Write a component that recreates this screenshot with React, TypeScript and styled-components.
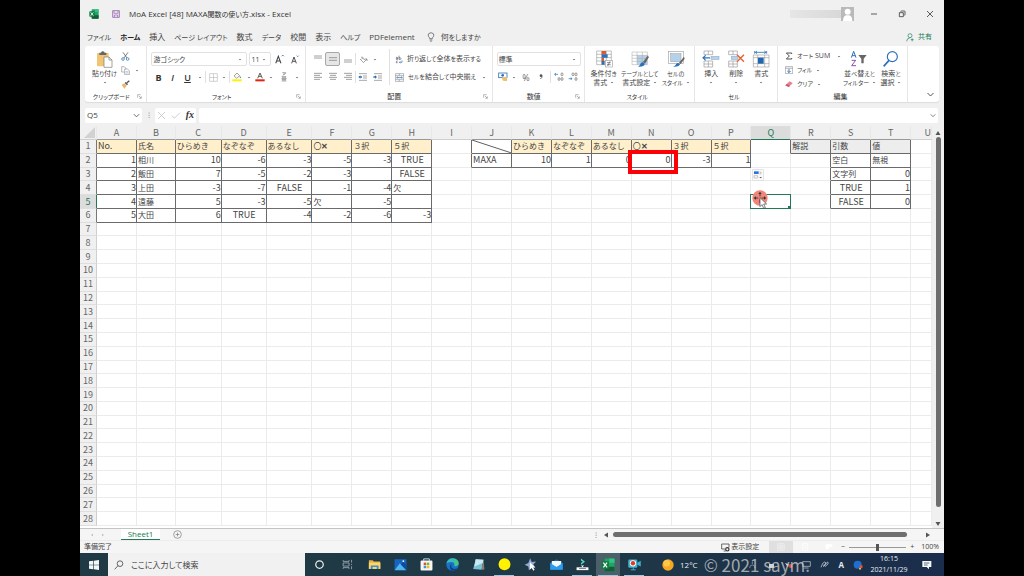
import React from "react";
import styled, { createGlobalStyle, css } from "styled-components";

const UI = `"Open Sans", "Noto Sans CJK JP", sans-serif`;
const SHEET = `"Noto Sans CJK JP", sans-serif`;
const GREEN = "#217a55";

const Global = createGlobalStyle`
  * { box-sizing: border-box; }
  body { margin: 0; background: #000; }
  button, input, select { font: inherit; color: inherit; border: 0; background: none; padding: 0; margin: 0; outline: 0; }
  svg { display: block; flex: none; }
`;

const Stage = styled.main`
  padding: 0 80px;
  background: #000;
`;
const Window = styled.div`
  display: flex;
  flex-direction: column;
  min-height: 100vh;
  background: #f0f0f0;
  color: #444;
  font: 8px/10px ${UI};
  font-feature-settings: "palt";
  white-space: nowrap;
`;
const Spacer = styled.div`
  flex: 1;
`;
const Row = styled.div<{ $gap?: number }>`
  display: flex;
  align-items: center;
  gap: ${(p) => p.$gap ?? 0}px;
`;

/* Interface text sets its kana one pixel smaller than its kanji. */
const Kana = styled.span`
  font-size: calc(1em - 1px);
`;
const Mixed = ({ children }: { children: string }) => (
  <span>
    {children.split(/([\u3040-\u30ff]+)/).map((part, i) => (i % 2 ? <Kana key={i}>{part}</Kana> : part))}
  </span>
);

/* ---- title bar ---- */
const TitleBar = styled.header`
  display: flex;
  align-items: center;
  height: 28px;
  padding: 0 0 0 9px;
`;
const Title = styled.h1`
  margin: 0;
  padding-left: 9px;
  font: inherit;
  color: #333;
`;
const TitleKanji = styled.span`
  font-size: 7px;
`;
const AccountName = styled.div`
  width: 51px;
  height: 8px;
  background: linear-gradient(90deg, #e6e6e6, #d8d8d8);
`;
const WinButton = styled.button`
  display: grid;
  place-items: center;
  width: 28px;
  height: 20px;
`;
const Avatar = styled.span`
  margin-right: 6px;
`;

/* ---- ribbon tabs ---- */
const Tabs = styled.nav`
  display: flex;
  align-items: center;
  gap: 9px;
  height: 18px;
  padding: 0 12px 0 7px;
`;
const Tab = styled.button<{ $active?: boolean }>`
  font-weight: ${(p) => (p.$active ? 700 : 400)};
  color: ${(p) => (p.$active ? "#222" : "#444")};
`;
const TellMe = styled.button`
  display: flex;
  align-items: center;
  gap: 6px;
  margin-left: 3px;
`;
const Share = styled.button`
  display: flex;
  align-items: center;
  gap: 4px;
  color: ${GREEN};
  font-size: 7px;
`;

/* ---- ribbon ---- */
const Ribbon = styled.section`
  display: flex;
  height: 56px;
  margin: 0 5px;
  background: #fff;
  border-radius: 3px;
  box-shadow: 0 1px 1px #dcdcdc;
  font-size: 7px;
  line-height: 9px;
`;
const Group = styled.div<{ $w: number }>`
  flex: ${(p) => p.$w} 1 0;
  min-width: 0;
  display: flex;
  flex-direction: column;
  border-right: 1px solid #e6e6e6;
`;
const GroupBody = styled.div<{ $pad?: number }>`
  flex: 1;
  display: flex;
  min-height: 0;
  padding: 3px 0 0 ${(p) => p.$pad ?? 4}px;
`;
const GroupLabel = styled.div`
  display: flex;
  justify-content: center;
  align-items: center;
  height: 11px;
  padding-right: 4px;
  color: #333;
`;
const GroupName = styled.span`
  flex: 1;
  text-align: center;
`;
const Stack = styled.div<{ $gap?: number; $pt?: number; $pl?: number }>`
  display: flex;
  flex-direction: column;
  gap: ${(p) => p.$gap ?? 0}px;
  padding: ${(p) => p.$pt ?? 0}px 0 0 ${(p) => p.$pl ?? 0}px;
`;
const Tool = styled.button<{ $w: number; $on?: boolean }>`
  display: grid;
  place-items: center;
  width: ${(p) => p.$w}px;
  height: 14px;
  flex: none;
  ${(p) =>
    p.$on &&
    css`
      background: #e6e6e6;
      border: 1px solid #a8a8a8;
      border-radius: 2px;
    `}
`;
const Letter = styled.span<{ $bold?: boolean; $italic?: boolean; $line?: boolean; $thin?: boolean }>`
  font-size: 9px;
  color: ${(p) => (p.$thin ? "#666" : "#333")};
  font-weight: ${(p) => (p.$bold ? 700 : p.$thin ? 400 : 600)};
  font-style: ${(p) => (p.$italic ? "italic" : "normal")};
  text-decoration: ${(p) => (p.$line ? "underline" : "none")};
`;
const Divider = styled.i<{ $h?: number; $m?: number }>`
  width: 1px;
  height: ${(p) => p.$h ?? 12}px;
  margin: 0 ${(p) => p.$m ?? 3}px;
  background: #e0e0e0;
`;
const TextTool = styled.button`
  display: flex;
  align-items: center;
  gap: 4px;
  height: 14px;
`;
const Combo = styled.span<{ $w: number }>`
  display: flex;
  align-items: center;
  width: ${(p) => p.$w}px;
  height: 14px;
  padding: 0 4px 0 1px;
  border: 1px solid #e1e1e1;
  border-radius: 2px;
  background: #fff;
`;
const Select = styled.select`
  flex: 1;
  min-width: 0;
  appearance: none;
`;
const BigButton = styled.button<{ $w: number }>`
  display: flex;
  flex-direction: column;
  align-items: center;
  width: ${(p) => p.$w}px;
  height: 40px;
  flex: none;
`;
const BigLabel = styled.span`
  display: flex;
  align-items: center;
  justify-content: center;
  gap: 3px;
  height: 9px;
`;
const BigIcon = styled.span`
  display: grid;
  place-items: center;
  height: 20px;
`;
const Collapse = styled.button`
  align-self: flex-end;
  display: grid;
  place-items: center end;
  flex: none;
  width: 31px;
  height: 16px;
  padding-right: 4px;
`;

/* ---- formula bar ---- */
const FormulaBar = styled.section`
  display: flex;
  align-items: center;
  height: 24px;
  padding: 2px 6px 0 5px;
  gap: 3px;
`;
const WhiteBox = styled.div<{ $w?: number }>`
  display: flex;
  align-items: center;
  justify-content: space-between;
  flex: ${(p) => (p.$w ? "none" : 1)};
  width: ${(p) => (p.$w ? `${p.$w}px` : "auto")};
  height: 15px;
  padding: 0 2px;
  background: #fff;
  border-radius: 2px;
`;
const BoxInput = styled.input`
  flex: 1;
  min-width: 0;
`;
const Fx = styled.span`
  font: italic 700 10px/12px "Liberation Serif", serif;
  color: #333;
`;
const Dots = styled.span`
  width: 7px;
  text-align: center;
  color: #888;
`;

/* ---- sheet ---- */
const SheetArea = styled.section`
  flex: 1;
  display: flex;
`;
const Table = styled.table`
  flex: 1;
  min-width: 0;
  display: flex;
  flex-direction: column;
  background: #fff;
  font: 9px/12px ${SHEET};
  color: #444;
`;
const HeadRows = styled.thead`
  display: block;
`;
const BodyRows = styled.tbody`
  flex: 1;
  display: grid;
  grid-template-rows: repeat(28, minmax(13px, 1fr));
  padding-bottom: 2px;
`;
const Line = styled.tr`
  display: grid;
  grid-template-columns: 17px 40fr 39fr 46fr 45fr 46fr repeat(15, 40fr) 21fr;
`;
const HeadCell = styled.th<{ $active?: boolean; $dark?: boolean; $end?: boolean }>`
  display: flex;
  align-items: center;
  justify-content: ${(p) => (p.$end ? "flex-end" : "center")};
  height: 14px;
  min-width: 0;
  padding: 0;
  overflow: hidden;
  font-weight: 400;
  color: ${(p) => (p.$active ? GREEN : "#666")};
  background: ${(p) => (p.$active ? "#dcdcdc" : "#f0f0f0")};
  border-right: 1px solid #e8e8e8;
  border-bottom: 1px solid ${(p) => (p.$active ? GREEN : p.$dark ? "#999" : "#cfcfcf")};
`;
const RowHead = styled.th<{ $active?: boolean; $dark?: boolean }>`
  display: flex;
  align-items: center;
  justify-content: center;
  padding: 0;
  min-height: 0;
  font-weight: 400;
  color: ${(p) => (p.$active ? GREEN : "#666")};
  background: ${(p) => (p.$active ? "#dcdcdc" : "#f0f0f0")};
  border-right: 1px solid ${(p) => (p.$active ? GREEN : p.$dark ? "#777" : "#cfcfcf")};
  border-bottom: 1px solid #dedede;
`;
const Cell = styled.td<{ $fill?: string; $align?: string; $r?: boolean; $b?: boolean; $jp?: boolean }>`
  position: relative;
  display: flex;
  align-items: center;
  justify-content: ${(p) => p.$align ?? "flex-start"};
  min-width: 0;
  min-height: 0;
  padding: 0 0 0 1px;
  font-size: ${(p) => (p.$jp ? 8 : 9)}px;
  font-feature-settings: normal;
  background: ${(p) => p.$fill ?? "#fff"};
  border-right: 1px solid ${(p) => (p.$r ? "#6a6a6a" : "#ebebeb")};
  border-bottom: 1px solid ${(p) => (p.$b ? "#6a6a6a" : "#ebebeb")};
`;
const Corner = styled.svg`
  width: 11px;
  height: 11px;
  margin-left: 3px;
`;
const Diagonal = styled.svg`
  position: absolute;
  inset: 0;
  width: 100%;
  height: 100%;
`;
const RedFrame = styled.div`
  position: absolute;
  z-index: 3;
  top: -4px;
  right: -7px;
  bottom: -7px;
  left: -4px;
  border: 4px solid #fb0007;
`;
const PasteTag = styled.div`
  position: absolute;
  z-index: 2;
  top: 1px;
  left: 1px;
`;
const Selection = styled.div`
  position: absolute;
  z-index: 2;
  inset: -1px;
  border: 1px solid ${GREEN};
  &::after {
    content: "";
    position: absolute;
    right: -1px;
    bottom: -1px;
    width: 3px;
    height: 3px;
    background: ${GREEN};
  }
`;
const Pointer = styled.div`
  position: absolute;
  z-index: 4;
  top: -5px;
  left: 1px;
`;
const VScroll = styled.div`
  width: 12px;
  display: flex;
  flex-direction: column;
  align-items: center;
  gap: 1px;
  padding: 4px 0 1px;
  background: #f0f0f0;
`;
const VThumb = styled.div`
  width: 5px;
  flex: 370 1 0;
  border-radius: 3px;
  background: #6e6e6e;
`;
const VRest = styled.div`
  flex: 12 1 0;
`;

/* ---- sheet tabs ---- */
const SheetBar = styled.section`
  display: flex;
  align-items: stretch;
  height: 12px;
  background: #f5f5f5;
  border-top: 1px solid #c4c4c4;
`;
const SheetNav = styled.div`
  display: flex;
  align-items: center;
  gap: 7px;
  width: 41px;
  padding-left: 10px;
`;
const SheetTab = styled.button`
  width: 39px;
  background: #fff;
  color: ${GREEN};
  border-bottom: 1px solid ${GREEN};
  line-height: 8px;
`;
const HScroll = styled.div`
  flex: 340 1 0;
  display: flex;
  align-items: center;
  gap: 4px;
  padding-right: 13px;
`;
const HThumb = styled.div`
  flex: 1;
  height: 5px;
  margin-right: 14px;
  border-radius: 3px;
  background: #6e6e6e;
`;
const TabsLeft = styled.div`
  flex: 514 1 0;
  display: flex;
`;
const AddSheet = styled.button`
  padding-left: 13px;
`;

/* ---- status bar ---- */
const StatusBar = styled.footer`
  display: flex;
  align-items: center;
  height: 13px;
  padding: 0 5px 0 4px;
  background: #f5f5f5;
  border-top: 1px solid #ececec;
  font-size: 7px;
`;
const DisplaySettings = styled.button`
  display: flex;
  align-items: center;
  gap: 1px;
  margin-right: 10px;
`;
const ViewButton = styled.button<{ $on?: boolean }>`
  display: grid;
  place-items: center;
  width: 24px;
  height: 12px;
  background: ${(p) => (p.$on ? "#e0e0e0" : "transparent")};
`;
const Zoom = styled.input`
  appearance: none;
  width: 57px;
  height: 8px;
  margin: 0 4px;
  background: linear-gradient(#999, #999) center / 100% 1px no-repeat;
  &::-webkit-slider-thumb {
    appearance: none;
    width: 3px;
    height: 7px;
    background: #555;
  }
`;
const Percent = styled.span`
  padding-left: 7px;
`;

/* ---- taskbar ---- */
const Taskbar = styled.nav`
  position: relative;
  display: flex;
  align-items: stretch;
  height: 23px;
  background: linear-gradient(90deg, #203a45, #1f3846 60%, #1a2d4c);
  color: #e8eef2;
`;
const StartButton = styled.button`
  display: grid;
  place-items: center;
  width: 28px;
`;
const SearchBox = styled.label`
  display: flex;
  align-items: center;
  gap: 7px;
  width: 197px;
  padding-left: 6px;
  background: #f1f1f1;
  color: #444;
`;
const SearchInput = styled.input`
  flex: 1;
  min-width: 0;
  &::placeholder {
    color: #444;
  }
`;
const TaskButton = styled.button<{ $w?: number; $active?: boolean }>`
  display: grid;
  place-items: center;
  width: ${(p) => p.$w ?? 26}px;
  background: ${(p) => (p.$active ? "#4b6069" : "transparent")};
  background-clip: content-box;
  padding: 0 1px;
`;
const OpenMark = styled.i`
  grid-area: 1 / 1;
  align-self: end;
  width: 20px;
  height: 1px;
  background: #9cc8e4;
`;
const TaskArt = styled.span`
  grid-area: 1 / 1;
`;
const Weather = styled.div`
  display: flex;
  align-items: center;
  gap: 6px;
  margin-left: 15px;
`;
const Tray = styled.div`
  display: flex;
  align-items: center;
  gap: 9px;
  padding-right: 5px;
`;
const Clock = styled.div`
  width: 42px;
  text-align: center;
  font-size: 7px;
  line-height: 11px;
`;
const Watermark = styled.div`
  position: absolute;
  right: 134px;
  bottom: 0;
  font: 17px/22px ${SHEET};
  font-feature-settings: normal;
  color: rgba(200, 200, 200, 0.8);
`;

/* ---- drawings ---- */
type IconProps = { w: number; h?: number; vb?: string; children: React.ReactNode };
const Icon = ({ w, h = w, vb, children }: IconProps) => (
  <svg width={w} height={h} viewBox={vb ?? `0 0 ${w * 3} ${h * 3}`} fill="none" aria-hidden="true">
    {children}
  </svg>
);
const Caret = () => (
  <Icon w={4} h={3}>
    <path d="M2 3 L6 7 L10 3Z" fill="#666" />
  </Icon>
);
const Chevron = ({ w = 8 }: { w?: number }) => (
  <Icon w={w} h={5} vb="0 0 24 15">
    <path d="M3 3 L12 12 L21 3" stroke="#555" strokeWidth="3" />
  </Icon>
);
const Launcher = () => (
  <Icon w={5}>
    <path d="M2 11V2H11M6 6L12 12M13 7V13H7" stroke="#777" strokeWidth="1.6" />
  </Icon>
);
const ExcelIcon = ({ w = 10 }: { w?: number }) => (
  <Icon w={w} vb="0 0 30 30">
    <rect x="8" y="1" width="21" height="28" rx="2" fill="#21a366" />
    <path d="M18 1H27Q29 1 29 3V10H18Z" fill="#33c481" />
    <path d="M8 19H29V27Q29 29 27 29H10Q8 29 8 27Z" fill="#185c37" />
    <rect x="1" y="7" width="16" height="16" rx="2" fill="#107c41" />
    <path d="M5 10L13 20M13 10L5 20" stroke="#fff" strokeWidth="2.6" />
  </Icon>
);
const Lines = ({ y, short }: { y: number[]; short?: "l" | "c" | "r" }) => (
  <Icon w={10}>
    {y.map((v, i) => {
      const cut = i % 2 === 1 && short;
      const a = cut && short !== "l" ? (short === "c" ? 6 : 9) : 3;
      const b = cut && short !== "r" ? (short === "c" ? 24 : 21) : 27;
      return <path key={v} d={`M${a} ${v}H${b}`} stroke="#888" strokeWidth="2.4" />;
    })}
  </Icon>
);
const Indent = ({ left }: { left?: boolean }) => (
  <Icon w={10}>
    <path d="M3 5H27M15 12H27M15 18H27M3 25H27" stroke="#888" strokeWidth="2.2" />
    <path d={left ? "M1 15L7 10V13H12V17H7V20Z" : "M12 15L6 10V13H1V17H6V20Z"} fill="#2a72b8" />
  </Icon>
);
const PasteIcon = () => (
  <Icon w={17}>
    <rect x="3" y="6" width="35" height="40" rx="2" fill="#f0c573" />
    <path d="M10 5H15Q16 1 20 1Q25 1 26 5H31V12H10Z" fill="#666" />
    <path d="M24 18H39L48 27V49H24Z" fill="#fff" stroke="#777" strokeWidth="2" />
    <path d="M39 18V27H48" stroke="#777" strokeWidth="2" />
  </Icon>
);
const CutIcon = () => (
  <Icon w={9}>
    <path d="M6 1L18 18M21 1L9 18" stroke="#555" strokeWidth="2.2" />
    <circle cx="6" cy="21" r="4" stroke="#2a72b8" strokeWidth="2.2" />
    <circle cx="20" cy="21" r="4" stroke="#2a72b8" strokeWidth="2.2" />
  </Icon>
);
const CopyIcon = () => (
  <Icon w={9}>
    <path d="M2 2H10L14 6V18H2Z" fill="#fff" stroke="#888" strokeWidth="1.8" />
    <path d="M11 9H19L25 14V26H11Z" fill="#fff" stroke="#888" strokeWidth="1.8" />
    <path d="M14 17H22M14 21H22" stroke="#6d9dcc" strokeWidth="1.6" />
  </Icon>
);
const BrushIcon = () => (
  <Icon w={9}>
    <path d="M2 14L10 10L17 17L10 26Z" fill="#edb569" />
    <path d="M11 9L18 16L21 13L14 6Z" fill="#555" />
    <path d="M17 9L25 2" stroke="#555" strokeWidth="4" />
  </Icon>
);
const BordersIcon = () => (
  <Icon w={9}>
    <path d="M2 2H25V25H2ZM13.5 2V25M2 13.5H25" stroke="#b5b5b5" strokeWidth="1.8" />
  </Icon>
);
const BucketIcon = () => (
  <Icon w={10}>
    <path d="M6 12L15 3L23 11L14 19Z" fill="#f8f8f8" stroke="#777" strokeWidth="2" />
    <path d="M23 11Q29 16 26 19Q22 18 23 11Z" fill="#2a72b8" />
    <rect x="1" y="22" width="28" height="6" fill="#fff200" />
  </Icon>
);
const FontColorIcon = () => (
  <Icon w={10}>
    <path d="M8 19L15 3L22 19M10.5 13H19.5" stroke="#555" strokeWidth="2.8" />
    <rect x="1" y="22" width="28" height="6" fill="#e82010" />
  </Icon>
);
const FontSizeIcon = ({ down }: { down?: boolean }) => (
  <Icon w={down ? 9 : 10} vb="0 0 27 27">
    <path d="M2 25L9 6L16 25M5 19H13" stroke="#444" strokeWidth="2.8" />
    <path d={down ? "M17 2L20 5L23 2" : "M18 6L21 3L24 6"} stroke="#2a72b8" strokeWidth="2.4" />
  </Icon>
);
const PhoneticIcon = () => (
  <Icon w={8} h={10}>
    <path d="M7 2H17Q16 7 12 8M12 4Q12 9 8 11" stroke="#777" strokeWidth="2" />
    <path d="M5 14H19M5 27H19M9 14V27M15 14V27M6 18H18V22H6Z" stroke="#777" strokeWidth="1.8" />
  </Icon>
);
const RotateIcon = () => (
  <Icon w={9}>
    <path d="M3 12L12 21M6 7Q11 4 14 10L17 15M7 13Q9 8 13 12" stroke="#777" strokeWidth="2" />
    <path d="M12 24L24 12M24 12V18M24 12H18" stroke="#777" strokeWidth="2" />
  </Icon>
);
const WrapIcon = () => (
  <Icon w={8} h={9}>
    <path d="M3 8Q6 5 8 8V13Q2 14 3 11Q4 9 8 10M12 2V13Q18 15 18 10Q17 7 12 8" stroke="#555" strokeWidth="2" />
    <path d="M8 18Q2 18 4 23Q6 25 8 23" stroke="#555" strokeWidth="2" />
    <path d="M21 16V22H13M16 19L13 22L16 25" stroke="#2a72b8" strokeWidth="2" />
  </Icon>
);
const MergeIcon = () => (
  <Icon w={9}>
    <path d="M1 2H26V25H1ZM13 2V8M13 19V25M1 8H26M1 19H26" stroke="#888" strokeWidth="1.8" />
    <path d="M5 13.5H22M8 11L5 13.5L8 16M19 11L22 13.5L19 16" stroke="#2a72b8" strokeWidth="2" />
  </Icon>
);
const CurrencyIcon = () => (
  <Icon w={10}>
    <rect x="2" y="3" width="25" height="14" fill="#fff" stroke="#2a72b8" strokeWidth="2.4" />
    <circle cx="14" cy="10" r="4" fill="#2a72b8" />
    <path d="M13 15H27V27H17Q13 26 13 22Z" fill="#efbf71" />
  </Icon>
);
const CommaIcon = () => (
  <Icon w={6} h={8}>
    <circle cx="9" cy="8" r="4" fill="#555" />
    <path d="M12 8Q13 14 7 18" stroke="#555" strokeWidth="2.6" />
  </Icon>
);
const DecimalIcon = ({ down }: { down?: boolean }) => (
  <Icon w={10}>
    <path d={down ? "M2 20H12M8 16L12 20L8 24" : "M12 7H2M6 3L2 7L6 11"} stroke="#2a72b8" strokeWidth="2.2" />
    <g stroke="#666" strokeWidth="2">
      <ellipse cx="24" cy="7" rx="3" ry="4.5" />
      <ellipse cx="24" cy="21" rx="3" ry="4.5" />
      {down ? <ellipse cx="15" cy="7" rx="3" ry="4.5" /> : <ellipse cx="15" cy="21" rx="3" ry="4.5" />}
    </g>
  </Icon>
);
const CondIcon = () => (
  <Icon w={18}>
    <path d="M5 3H49V44H5ZM5 13H49M5 23H49M5 33H49M20 3V44M34 3V44" stroke="#999" strokeWidth="1.8" fill="#fff" />
    <path d="M20 3H33V13H20ZM20 23H27V33H20Z" fill="#e2572b" />
    <path d="M20 13H38V23H20ZM20 33H29V44H20Z" fill="#2a72b8" />
    <rect x="31" y="31" width="21" height="20" fill="#fff" stroke="#999" strokeWidth="1.8" />
    <path d="M36 38H47M36 44H47M45 34L38 48" stroke="#555" strokeWidth="2" />
  </Icon>
);
const TableIcon = () => (
  <Icon w={18}>
    <rect x="3" y="6" width="46" height="38" fill="#fff" />
    <path d="M18 16H49V44H18Z" fill="#b5d2ea" />
    <path d="M3 6H49V44H3ZM3 16H49M3 25H49M3 34H49M18 6V44M34 6V44" stroke="#aaa" strokeWidth="1.6" />
    <path d="M51 16L36 36L42 41L53 22Z" fill="#666" />
    <path d="M21 50Q28 48 29 40Q36 33 41 42Q40 51 21 50Z" fill="#2a72b8" />
  </Icon>
);
const CellStyleIcon = () => (
  <Icon w={18}>
    <rect x="4" y="5" width="45" height="36" fill="#fff" stroke="#999" strokeWidth="1.8" />
    <rect x="11" y="11" width="31" height="24" fill="#b5d2ea" stroke="#999" strokeWidth="1.5" />
    <path d="M51 20L36 38L41 42L53 26Z" fill="#666" />
    <path d="M18 50Q25 48 28 41Q34 36 39 43Q37 51 18 50Z" fill="#2a72b8" />
  </Icon>
);
const InsertIcon = () => (
  <Icon w={18}>
    <path d="M6 3H32V14H6ZM19 3V14M6 33H32V51H6ZM6 42H32M19 33V51" stroke="#999" strokeWidth="2" />
    <rect x="27" y="19" width="24" height="9" fill="#b5d2ea" stroke="#8fb0cc" strokeWidth="1.8" />
    <path d="M24 23.5H3M11 16L3 23.5L11 31" stroke="#2a72b8" strokeWidth="3.5" />
  </Icon>
);
const DeleteIcon = () => (
  <Icon w={18}>
    <path d="M5 3H31V14H5ZM18 3V14M5 33H31V51H5ZM5 42H31M18 33V51" stroke="#999" strokeWidth="2" />
    <rect x="13" y="19" width="20" height="9" fill="#b5d2ea" stroke="#8fb0cc" strokeWidth="1.8" />
    <path d="M30 14L51 35M51 14L30 35" stroke="#e2622f" strokeWidth="4" />
  </Icon>
);
const FormatIcon = () => (
  <Icon w={18}>
    <path d="M8 3V11M44 3V11M10 7H42M15 3L10 7L15 11M37 3L42 7L37 11" stroke="#2a72b8" strokeWidth="2.5" />
    <path d="M4 15H51V51H4ZM4 23H51M4 41H51M17 15V51M38 15V51" stroke="#999" strokeWidth="1.8" />
    <rect x="18" y="23" width="17" height="18" fill="#1f66ae" />
  </Icon>
);
const SigmaIcon = () => (
  <Icon w={8}>
    <path d="M20 6V3H4L13 12L4 21H20V18" stroke="#444" strokeWidth="2.8" />
  </Icon>
);
const FillIcon = () => (
  <Icon w={8}>
    <path d="M1 2H23V23H1ZM1 7H23" stroke="#888" strokeWidth="1.8" />
    <path d="M12 9V19M7 15L12 20L17 15" stroke="#2a72b8" strokeWidth="2.8" />
  </Icon>
);
const EraserIcon = () => (
  <Icon w={8}>
    <path d="M14 4L23 10L11 21L1 16Z" fill="#ea7f8d" />
    <path d="M6 12L15 18L11 21L1 16Z" fill="#c9566a" />
  </Icon>
);
const SortIcon = () => (
  <Icon w={18}>
    <path d="M4 23L11 4L18 23M6 17H16" stroke="#2a72b8" strokeWidth="3" />
    <path d="M5 31H17L5 47H18" stroke="#8a4fb0" strokeWidth="3" />
    <path d="M25 15H50L41 26V40H34V26Z" fill="#666" />
  </Icon>
);
const FindIcon = () => (
  <Icon w={18}>
    <circle cx="31" cy="20" r="15" stroke="#2a72b8" strokeWidth="3.5" />
    <path d="M21 31L5 49" stroke="#2a72b8" strokeWidth="5" />
  </Icon>
);
const Arrow = ({ d }: { d: "u" | "d" | "l" | "r" }) => (
  <Icon w={6} vb="0 0 12 12">
    <path
      d={{ u: "M1 10L6 2L11 10Z", d: "M1 2L6 10L11 2Z", l: "M10 1L2 6L10 11Z", r: "M2 1L10 6L2 11Z" }[d]}
      fill="#555"
    />
  </Icon>
);
const Magnifier = () => (
  <Icon w={10}>
    <circle cx="18" cy="11" r="8.5" stroke="#444" strokeWidth="2.4" />
    <path d="M12 17L2 28" stroke="#444" strokeWidth="2.4" />
  </Icon>
);

/* ---- sheet data ---- */
type Item = { v: React.ReactNode; fill?: string; boxed?: boolean; jp?: boolean; align?: string; over?: React.ReactNode };
const COLS = "ABCDEFGHIJKLMNOPQRSTU".split("");
const CREAM = "#fff0cb";
const GREY = "#ededed";
const OX = (
  <>
    〇<b>✕</b>
  </>
);
const cells: Record<string, Item> = {};
const put = (start: number, row: number, values: React.ReactNode[], fill?: string) =>
  values.forEach((v, i) => {
    const num = typeof v === "number";
    const bool = v === "TRUE" || v === "FALSE";
    cells[COLS[start + i] + row] = {
      v,
      fill,
      boxed: true,
      jp: !num && !bool && !/^[A-Z.]/.test(String(v)),
      align: num ? "flex-end" : bool ? "center" : undefined,
    };
  });

const HEADS = ["ひらめき", "なぞなぞ", "あるなし", OX, "３択", "５択"];
put(0, 1, ["No.", "氏名", ...HEADS], CREAM);
put(0, 2, [1, "相川", 10, -6, -3, -5, -3, "TRUE"]);
put(0, 3, [2, "飯田", 7, -5, -2, -3, "", "FALSE"]);
put(0, 4, [3, "上田", -3, -7, "FALSE", -1, -4, "欠"]);
put(0, 5, [4, "遠藤", 5, -3, -5, "欠", -5, ""]);
put(0, 6, [5, "大田", 6, "TRUE", -4, -2, -6, -3]);
put(9, 1, [""]);
put(10, 1, HEADS, CREAM);
put(9, 2, ["MAXA", 10, 1, 0, 0, -3, 1]);
put(17, 1, ["解説", "引数", "値"], GREY);
put(18, 2, ["空白", "無視"]);
put(18, 3, ["文字列", 0]);
put(18, 4, ["TRUE", 1]);
put(18, 5, ["FALSE", 0]);

cells.J1.over = (
  <Diagonal viewBox="0 0 40 14" preserveAspectRatio="none">
    <path d="M0 0L40 14" stroke="#555" strokeWidth="1" />
  </Diagonal>
);
cells.N2.over = <RedFrame />;
cells.Q3 = {
  v: "",
  over: (
    <PasteTag>
      <Icon w={12}>
        <rect x="1" y="1" width="34" height="34" rx="3" fill="#fafafa" stroke="#d0d0d0" strokeWidth="2" />
        <rect x="6" y="7" width="14" height="8" fill="#2f6fe0" />
        <path d="M6 20H17V27H6ZM22 9H27V15H22" stroke="#aaa" strokeWidth="1.8" />
        <path d="M22 24H30L26 28Z" fill="#555" />
      </Icon>
    </PasteTag>
  ),
};
cells.Q5 = {
  v: "",
  over: (
    <>
      <Selection />
      <Pointer>
        <Icon w={17} h={19}>
          <circle cx="24" cy="24" r="23" fill="#f0857a" />
          <path d="M24 9V39M9 24H39" stroke="#333" strokeWidth="2.5" strokeDasharray="10 10" />
          <path d="M24 5L19 12H29ZM5 24L12 19V29ZM43 24L36 19V29Z" fill="#333" />
          <path d="M24 23V50L30 44L35 55L40 53L35 42H44Z" fill="#fff" stroke="#444" strokeWidth="2" />
        </Icon>
      </Pointer>
    </>
  ),
};
const boxed = (c: number, r: number) => Boolean(cells[(COLS[c] ?? "-") + r]?.boxed);

const Sheet = () => (
  <Table>
    <HeadRows>
      <Line>
        <HeadCell>
          <Corner viewBox="0 0 11 11">
            <path d="M11 0V11H0Z" fill="#d2d2d2" />
          </Corner>
        </HeadCell>
        {COLS.map((c, i) => (
          <HeadCell key={c} scope="col" $active={c === "Q"} $dark={boxed(i, 1)} $end={c === "U"}>
            {c}
          </HeadCell>
        ))}
      </Line>
    </HeadRows>
    <BodyRows>
      {Array.from({ length: 28 }, (_, n) => n + 1).map((r) => (
        <Line key={r}>
          <RowHead scope="row" $active={r === 5} $dark={boxed(0, r)}>
            {r}
          </RowHead>
          {COLS.map((c, i) => {
            const it = cells[c + r];
            return (
              <Cell
                key={c}
                $fill={it?.fill}
                $align={it?.align}
                $jp={it?.jp}
                $r={boxed(i, r) || boxed(i + 1, r)}
                $b={boxed(i, r) || boxed(i, r + 1)}
              >
                {it?.v}
                {it?.over}
              </Cell>
            );
          })}
        </Line>
      ))}
    </BodyRows>
  </Table>
);

/* ---- ribbon pieces ---- */
const Big = ({ w, icon, lines, caretBelow }: { w: number; icon: React.ReactNode; lines: string[]; caretBelow?: boolean }) => (
  <BigButton $w={w}>
    <BigIcon>{icon}</BigIcon>
    {lines.map((l, i) => (
      <BigLabel key={l}>
        <Mixed>{l}</Mixed>
        {!caretBelow && i === lines.length - 1 && <Caret />}
      </BigLabel>
    ))}
    {caretBelow && (
      <BigLabel>
        <Caret />
      </BigLabel>
    )}
  </BigButton>
);
const Label = ({ children, launcher }: { children: string; launcher?: boolean }) => (
  <GroupLabel>
    <GroupName>
      <Mixed>{children}</Mixed>
    </GroupName>
    {launcher && <Launcher />}
  </GroupLabel>
);
const Drop = ({ w, label, value }: { w: number; label: string; value: string }) => (
  <Combo $w={w}>
    <Select aria-label={label} defaultValue={value}>
      <option>{value}</option>
    </Select>
    <Caret />
  </Combo>
);
const CaretTool = ({ w = 9 }: { w?: number }) => (
  <Tool as="span" $w={w}>
    <Caret />
  </Tool>
);

const TASKS: { open?: boolean; active?: boolean; w?: number; name: string; art: React.ReactNode }[] = [
  { name: "Cortana", w: 28, art: <circle cx="24" cy="24" r="12" stroke="#e8eef2" strokeWidth="4" /> },
  {
    name: "Task view",
    w: 28,
    art: <path d="M10 10V14H29V10M10 38V34H29V38M10 19H29V29H10ZM37 9V18M37 22V26M37 30V39" stroke="#b9c5ca" strokeWidth="2.2" />,
  },
  {
    name: "Explorer",
    art: (
      <>
        <path d="M6 10H18L22 14H42V38H6Z" fill="#eab040" />
        <rect x="6" y="18" width="37" height="20" fill="#fcd56a" />
        <path d="M12 38V27H37V38H31V32H18V38Z" fill="#3b8ed0" />
      </>
    ),
  },
  {
    name: "Photos",
    art: (
      <>
        <rect x="5" y="7" width="38" height="35" fill="#1565c0" />
        <path d="M5 42L22 20L43 42Z" fill="#4fb4ef" />
        <path d="M25 24L34 16L43 25V42Z" fill="#0b4c9c" />
        <circle cx="33" cy="13" r="3" fill="#fff" />
      </>
    ),
  },
  {
    name: "Store",
    art: (
      <>
        <path d="M15 12V6H33V12" stroke="#cfe0ea" strokeWidth="3" />
        <rect x="5" y="11" width="38" height="32" rx="3" fill="#f6f6f6" />
        <rect x="15" y="18" width="8" height="8" fill="#e74c25" />
        <rect x="25" y="18" width="8" height="8" fill="#7cb928" />
        <rect x="15" y="28" width="8" height="8" fill="#2aa0e0" />
        <rect x="25" y="28" width="8" height="8" fill="#fbb914" />
      </>
    ),
  },
  {
    name: "Edge",
    art: (
      <>
        <circle cx="24" cy="24" r="20" fill="#1673c9" />
        <path d="M5 20Q10 3 26 4Q44 6 44 21Q42 31 29 29Q33 22 26 17Q16 14 5 20Z" fill="#45c48a" />
        <path d="M5 20Q12 5 26 6Q35 7 33 16Q18 8 5 20Z" fill="#35b5dc" />
        <path d="M22 20Q16 30 25 37Q31 40 39 36Q33 46 20 42Q10 30 22 20Z" fill="#0c3f86" />
      </>
    ),
  },
  {
    name: "Notepad",
    art: (
      <>
        <path d="M15 7L40 9L34 41L7 38Z" fill="#7cc0d8" />
        <path d="M15 7L40 9L38 19L11 30Z" fill="#c8e8f2" />
        <path d="M40 9L43 40L34 41Z" fill="#8b8172" />
      </>
    ),
  },
  { name: "Marker", open: true, art: <circle cx="24" cy="23" r="19" fill="#fff100" /> },
  {
    name: "Pointer tool",
    art: (
      <>
        <path d="M23 4L28 16L42 14L33 24L40 36L27 33L19 43L17 30L5 25L17 19Z" fill="#8fa9d8" />
        <path d="M22 17V40L28 35L33 44L37 41L32 33H39Z" fill="#fff" />
      </>
    ),
  },
  {
    name: "Mail",
    art: (
      <>
        <path d="M4 19L24 7L44 19V41H4Z" fill="#0f6cbd" />
        <path d="M9 13H39V26L24 33L9 26Z" fill="#f4f8fc" />
        <path d="M4 19L24 32L44 19V41H4Z" fill="#2a9df0" />
      </>
    ),
  },
  {
    name: "Editor",
    open: true,
    art: (
      <>
        <path d="M19 5L32 15L19 25V19L25 15L19 11Z" fill="#4fe0cf" />
        <path d="M19 27H29L24 33Z" fill="#fff" />
        <path d="M5 33H43V42H5Z" fill="#fff" />
        <path d="M13 37H35" stroke="#213a48" strokeWidth="2" />
      </>
    ),
  },
  { name: "Excel", open: true, active: true, art: null },
  {
    name: "Recorder",
    open: true,
    art: (
      <>
        <rect x="4" y="8" width="29" height="26" rx="4" fill="#3fb4d0" />
        <path d="M33 18L44 12V30L33 25Z" fill="#3fb4d0" />
        <circle cx="19" cy="20" r="10" fill="#fff" />
        <circle cx="19" cy="20" r="7" fill="#e0382a" />
        <path d="M12 41H28M20 34V41" stroke="#3fb4d0" strokeWidth="3" />
      </>
    ),
  },
];

export default function App() {
  return (
    <Stage>
      <Global />
      <Window lang="ja">
        <TitleBar>
          <Row $gap={13}>
            <ExcelIcon />
            <Icon w={8}>
              <path d="M2 2H22V22H2Z" fill="#f3eaf6" stroke="#8d62a3" strokeWidth="2.4" />
              <path d="M6 3V10H18V3M7 22V15H17V22" stroke="#8d62a3" strokeWidth="2" />
            </Icon>
          </Row>
          <Title>
            MoA Excel [48] MAXA<TitleKanji>関数の使い方</TitleKanji>.xlsx - Excel
          </Title>
          <Spacer />
          <AccountName />
          <Avatar>
            <Icon w={13} h={14}>
              <rect width="39" height="42" fill="#b9b9b9" />
              <circle cx="20" cy="14" r="9" fill="#fff" />
              <path d="M6 42Q6 27 16 25H24Q34 27 34 42Z" fill="#fff" />
            </Icon>
          </Avatar>
          <WinButton aria-label="Minimize">
            <Icon w={8}>
              <path d="M3 12H21" stroke="#444" strokeWidth="2.6" />
            </Icon>
          </WinButton>
          <WinButton aria-label="Restore">
            <Icon w={8}>
              <path d="M4 8H16V20H4ZM8 5Q8 3 11 3H19Q21 3 21 5V14Q21 16 19 16" stroke="#444" strokeWidth="2.6" />
            </Icon>
          </WinButton>
          <WinButton aria-label="Close">
            <Icon w={8}>
              <path d="M3 3L21 21M21 3L3 21" stroke="#444" strokeWidth="2.6" />
            </Icon>
          </WinButton>
        </TitleBar>

        <Tabs>
          {["ファイル", "ホーム", "挿入", "ページ レイアウト", "数式", "データ", "校閲", "表示", "ヘルプ", "PDFelement"].map((t) => (
            <Tab key={t} $active={t === "ホーム"}>
              <Mixed>{t}</Mixed>
            </Tab>
          ))}
          <TellMe>
            <Icon w={8} h={10}>
              <path d="M8 20Q8 17 5 14Q2 9 5 5Q12 -1 19 5Q22 9 19 14Q16 17 16 20ZM8 24H16M10 28H14" stroke="#555" strokeWidth="2.2" />
            </Icon>
            <Mixed>何をしますか</Mixed>
          </TellMe>
          <Spacer />
          <Share>
            <Icon w={8} h={9}>
              <circle cx="12" cy="8" r="6" stroke={GREEN} strokeWidth="2" />
              <path d="M2 25Q3 15 11 15M14 20H23M18.5 16V25" stroke={GREEN} strokeWidth="2" />
            </Icon>
            共有
          </Share>
        </Tabs>

        <Ribbon>
          <Group $w={62}>
            <GroupBody>
              <Big w={31} icon={<PasteIcon />} lines={["貼り付け"]} caretBelow />
              <Stack>
                <Tool $w={11} aria-label="切り取り"><CutIcon /></Tool>
                <Row>
                  <Tool $w={11} aria-label="コピー"><CopyIcon /></Tool>
                  <CaretTool w={11} />
                </Row>
                <Tool $w={11} aria-label="書式のコピー"><BrushIcon /></Tool>
              </Stack>
            </GroupBody>
            <Label launcher>クリップボード</Label>
          </Group>

          <Group $w={159}>
            <GroupBody>
              <Stack $gap={4} $pt={3}>
                <Row $gap={2}>
                  <Drop w={96} label="フォント名" value="游ゴシック" />
                  <Drop w={22} label="フォント サイズ" value="11" />
                  <Tool $w={14}><FontSizeIcon /></Tool>
                  <Tool $w={12}><FontSizeIcon down /></Tool>
                </Row>
                <Row>
                  <Tool $w={14}><Letter $bold>B</Letter></Tool>
                  <Tool $w={14}><Letter $italic>I</Letter></Tool>
                  <Tool $w={16}><Letter $line>U</Letter></Tool>
                  <CaretTool />
                  <Divider $m={1} />
                  <Tool $w={12}><BordersIcon /></Tool>
                  <CaretTool />
                  <Divider $m={1} />
                  <Tool $w={12}><BucketIcon /></Tool>
                  <CaretTool w={11} />
                  <Tool $w={12}><FontColorIcon /></Tool>
                  <CaretTool w={10} />
                  <Tool $w={16}><PhoneticIcon /></Tool>
                  <CaretTool />
                </Row>
              </Stack>
            </GroupBody>
            <Label launcher>フォント</Label>
          </Group>

          <Group $w={187}>
            <GroupBody>
              <Stack $gap={4} $pt={3}>
                <Row>
                  <Tool $w={15}><Lines y={[6, 12]} /></Tool>
                  <Tool $w={15} $on><Lines y={[11, 19]} /></Tool>
                  <Tool $w={15}><Lines y={[18, 24]} /></Tool>
                  <Divider $m={0} />
                  <Tool $w={14}><RotateIcon /></Tool>
                  <CaretTool />
                </Row>
                <Row>
                  <Tool $w={15}><Lines y={[4, 10, 16, 22]} short="l" /></Tool>
                  <Tool $w={15}><Lines y={[4, 10, 16, 22]} short="c" /></Tool>
                  <Tool $w={15}><Lines y={[4, 10, 16, 22]} short="r" /></Tool>
                  <Divider $m={0} />
                  <Tool $w={14}><Indent left /></Tool>
                  <Tool $w={16}><Indent /></Tool>
                </Row>
              </Stack>
              <Divider $h={36} />
              <Stack $gap={4} $pt={3} $pl={2}>
                <TextTool><WrapIcon /><Mixed>折り返して全体を表示する</Mixed></TextTool>
                <TextTool><MergeIcon /><Mixed>セルを結合して中央揃え</Mixed><CaretTool /></TextTool>
              </Stack>
            </GroupBody>
            <Label launcher>配置</Label>
          </Group>

          <Group $w={92}>
            <GroupBody>
              <Stack $gap={4} $pt={3}>
                <Drop w={84} label="表示形式" value="標準" />
                <Row>
                  <Tool $w={13}><CurrencyIcon /></Tool>
                  <CaretTool />
                  <Tool $w={15}><Letter $thin>%</Letter></Tool>
                  <Tool $w={14}><CommaIcon /></Tool>
                  <Divider $m={2} />
                  <Tool $w={12}><DecimalIcon /></Tool>
                  <Tool $w={16}><DecimalIcon down /></Tool>
                </Row>
              </Stack>
            </GroupBody>
            <Label launcher>数値</Label>
          </Group>

          <Group $w={110}>
            <GroupBody $pad={1}>
              <Big w={36} icon={<CondIcon />} lines={["条件付き", "書式"]} />
              <Big w={36} icon={<TableIcon />} lines={["テーブルとして", "書式設定"]} />
              <Big w={36} icon={<CellStyleIcon />} lines={["セルの", "スタイル"]} />
            </GroupBody>
            <Label>スタイル</Label>
          </Group>

          <Group $w={83}>
            <GroupBody>
              <Big w={25} icon={<InsertIcon />} lines={["挿入"]} caretBelow />
              <Big w={25} icon={<DeleteIcon />} lines={["削除"]} caretBelow />
              <Big w={25} icon={<FormatIcon />} lines={["書式"]} caretBelow />
            </GroupBody>
            <Label>セル</Label>
          </Group>

          <Group $w={130}>
            <GroupBody $pad={7}>
              <Stack>
                <TextTool><SigmaIcon /><Mixed>オート SUM</Mixed><CaretTool /></TextTool>
                <TextTool><FillIcon /><Mixed>フィル</Mixed><Caret /></TextTool>
                <TextTool><EraserIcon /><Mixed>クリア</Mixed><Caret /></TextTool>
              </Stack>
              <Spacer />
              <Big w={31} icon={<SortIcon />} lines={["並べ替えと", "フィルター"]} />
              <Big w={32} icon={<FindIcon />} lines={["検索と", "選択"]} />
            </GroupBody>
            <Label>編集</Label>
          </Group>
          <Collapse aria-label="リボンを折りたたむ">
            <Chevron w={9} />
          </Collapse>
        </Ribbon>

        <FormulaBar>
          <WhiteBox $w={57}>
            <BoxInput aria-label="名前ボックス" defaultValue="Q5" />
            <Chevron w={7} />
          </WhiteBox>
          <Dots>⁝</Dots>
          <WhiteBox $w={41}>
            <Icon w={9}><path d="M3 3L24 24M24 3L3 24" stroke="#bbb" strokeWidth="2.2" /></Icon>
            <Icon w={10} h={9}><path d="M3 14L10 22L27 5" stroke="#bbb" strokeWidth="2.2" /></Icon>
            <Fx>fx</Fx>
          </WhiteBox>
          <WhiteBox>
            <BoxInput aria-label="数式バー" />
            <Chevron w={6} />
          </WhiteBox>
        </FormulaBar>

        <SheetArea>
          <Sheet />
          <VScroll>
            <Arrow d="u" />
            <VThumb />
            <VRest />
            <Arrow d="d" />
          </VScroll>
        </SheetArea>

        <SheetBar>
          <TabsLeft>
            <SheetNav>
              <Icon w={4}><path d="M9 2L3 6L9 10Z" fill="#bbb" /></Icon>
              <Icon w={4}><path d="M3 2L9 6L3 10Z" fill="#bbb" /></Icon>
            </SheetNav>
            <SheetTab>Sheet1</SheetTab>
            <AddSheet aria-label="新しいシート">
              <Icon w={9}>
                <circle cx="13.5" cy="13.5" r="11.5" stroke="#777" strokeWidth="2" />
                <path d="M8 13.5H19M13.5 8V19" stroke="#777" strokeWidth="2" />
              </Icon>
            </AddSheet>
          </TabsLeft>
          <HScroll>
            <Dots>⁝</Dots>
            <Arrow d="l" />
            <HThumb />
            <Arrow d="r" />
          </HScroll>
        </SheetBar>

        <StatusBar>
          準備完了
          <Spacer />
          <DisplaySettings>
            <Icon w={9}>
              <path d="M24 13V3H2V18H12M8 24H14" stroke="#444" strokeWidth="2.4" />
              <circle cx="19" cy="19" r="5" stroke="#333" strokeWidth="3.5" />
            </Icon>
            表示設定
          </DisplaySettings>
          <ViewButton $on aria-label="標準">
            <Icon w={8}><path d="M2 2H22V22H2ZM2 9H22M2 15H22M9 2V22M15 2V22" stroke="#f4f4f4" strokeWidth="1.8" /></Icon>
          </ViewButton>
          <ViewButton aria-label="ページ レイアウト">
            <Icon w={8}><path d="M4 2H20V22H4ZM8 8H16M8 14H16" stroke="#fff" strokeWidth="2" /></Icon>
          </ViewButton>
          <ViewButton aria-label="改ページ プレビュー">
            <Icon w={8}><path d="M2 4H22V12H12V18H2Z" fill="#fff" /></Icon>
          </ViewButton>
          <Row>
            −
            <Zoom type="range" aria-label="ズーム" defaultValue={50} />
            +
            <Percent>100%</Percent>
          </Row>
        </StatusBar>

        <Taskbar>
          <StartButton aria-label="スタート">
            <Icon w={10}>
              <path d="M0 4L13 2V14H0ZM15 2L30 0V14H15ZM0 16H13V28L0 26ZM15 16H30V30L15 28Z" fill="#f4f7f8" />
            </Icon>
          </StartButton>
          <SearchBox>
            <Magnifier />
            <SearchInput placeholder="ここに入力して検索" />
          </SearchBox>
          {TASKS.map((t) => (
            <TaskButton key={t.name} aria-label={t.name} $w={t.w} $active={t.active}>
              <TaskArt>{t.art ? <Icon w={15} vb="0 0 48 48">{t.art}</Icon> : <ExcelIcon w={14} />}</TaskArt>
              {t.open && <OpenMark />}
            </TaskButton>
          ))}
          <Weather>
            <Icon w={12}>
              <circle cx="18" cy="18" r="17" fill="#f7a823" />
              <circle cx="14" cy="13" r="10" fill="#fdc64a" />
            </Icon>
            12°C
          </Weather>
          <Spacer />
          <Tray>
            <Icon w={9}><path d="M5 24Q5 15 13 15Q21 15 21 24M13 4V12" stroke="#9fb0ba" strokeWidth="2" /></Icon>
            <Icon w={9}><path d="M9 12H24V24H9Z" fill="#cdd5da" /></Icon>
            <Icon w={9}><path d="M3 9L14 13L12 22Z" fill="#dfe5e8" /><circle cx="20" cy="18" r="6" fill="#d9463c" /></Icon>
            <Icon w={9}><path d="M2 5H25V19H2ZM7 24H20" stroke="#cdd5da" strokeWidth="2" /></Icon>
            <Icon w={9}>
              <path d="M3 22L8 10Q16 2 18 9Q16 17 9 16M10 21L20 8Q26 4 24 12L15 20" stroke="#dfe5e8" strokeWidth="2" />
            </Icon>
            <b>A</b>
            <Icon w={10}>
              <circle cx="14" cy="14" r="12" fill="#1c6fd4" />
              <circle cx="24" cy="20" r="5" fill="#e8502e" />
              <circle cx="21" cy="26" r="3" fill="#f6c544" />
            </Icon>
          </Tray>
          <Clock>
            16:15
            <br />
            2021/11/29
          </Clock>
          <TaskButton $w={34} aria-label="通知">
            <Icon w={10}>
              <path d="M1 3H28V21H21V28L14 21H1Z" fill="#f4f7f8" />
              <path d="M6 9H22M6 15H17" stroke="#1a2d4c" strokeWidth="2" />
            </Icon>
          </TaskButton>
          <Watermark>© 2021 saym.</Watermark>
        </Taskbar>
      </Window>
    </Stage>
  );
}
